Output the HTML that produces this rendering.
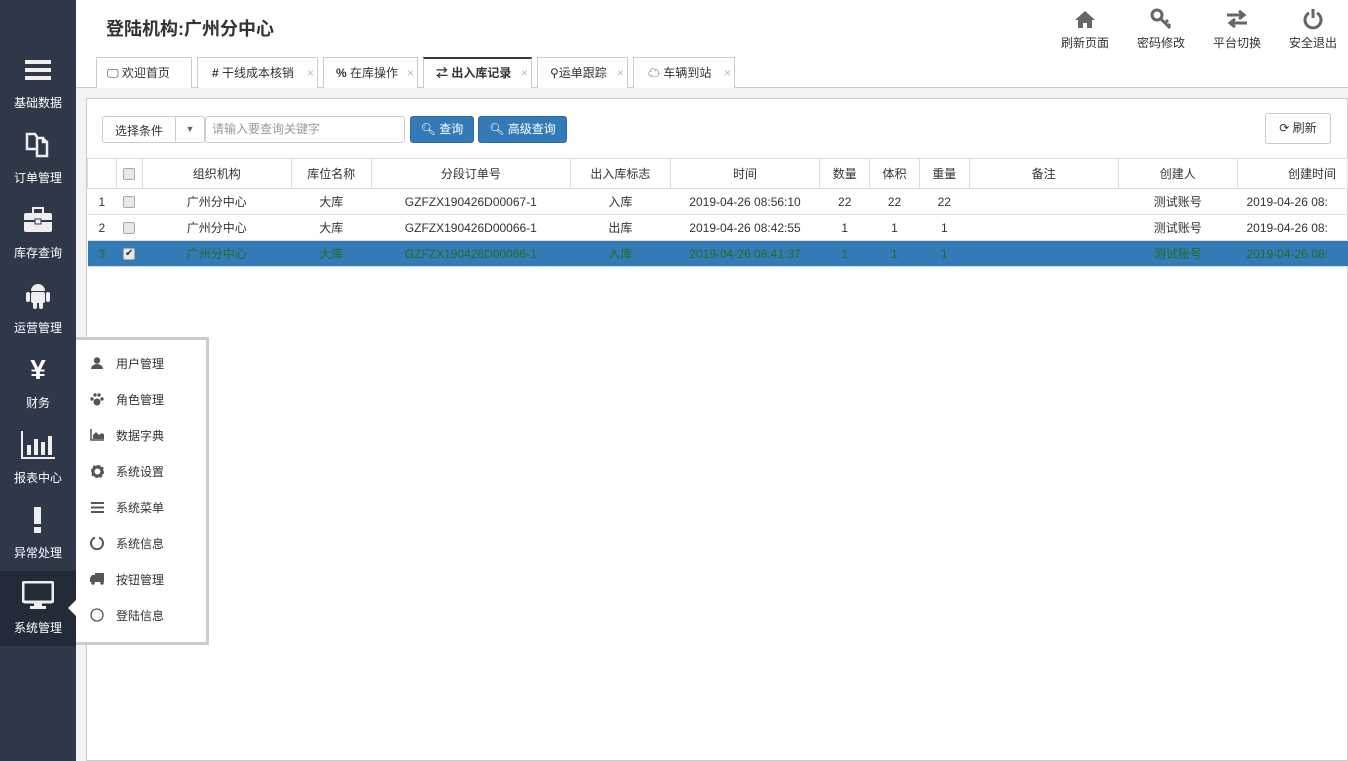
<!DOCTYPE html>
<html><head><meta charset="utf-8"><style>
*{box-sizing:border-box;margin:0;padding:0}
body{width:1348px;height:761px;overflow:hidden;background:#fff;font-family:"Liberation Sans","Noto Sans CJK SC",sans-serif;font-size:12px;color:#333;position:relative}
.side{position:absolute;left:0;top:0;width:76px;height:761px;background:#2e3849}
.mi{position:absolute;left:0;width:76px;height:75px;color:#fff;text-align:center}
.mi .ic{position:absolute;left:0;right:0;top:9px;height:30px;display:flex;justify-content:center;align-items:center}
.mi .lb{position:absolute;left:0;right:0;top:48px;font-size:12px}
.act{background:#232b38}
.hdr{position:absolute;left:76px;top:0;right:0;height:57px}
.title{position:absolute;left:30px;top:15px;font-size:18px;font-weight:bold;color:#333}
.tb{position:absolute;top:8px;width:60px;text-align:center;color:#333}
.tb .i{height:22px;display:flex;justify-content:center;align-items:center}
.tb .t{margin-top:4px}
.tabs{position:absolute;left:76px;top:57px;right:0;height:31px;border-bottom:1px solid #ccc}
.tab{position:absolute;top:0;height:31px;border:1px solid #ccc;border-bottom:none;background:#fff;line-height:30px;font-size:12px;color:#333;padding-left:10px}
.tab .x{color:#bbb;font-size:12px;position:absolute;right:3px;top:0}
.tab.on{border-top:2px solid #2e3849;height:31px;line-height:28px;font-weight:bold}
.gray{position:absolute;left:76px;top:88px;right:0;bottom:0;background:#f3f3f3}
.panel{position:absolute;left:86px;top:98px;right:0;bottom:0;background:#fff;border:1px solid #ccc}
.sel{position:absolute;left:102px;top:116px;width:103px;height:27px;border:1px solid #ccc;border-radius:3px;background:#fff}
.inp{position:absolute;left:205px;top:116px;width:200px;height:27px;border:1px solid #ccc;border-radius:3px;color:#999;padding-left:6px;line-height:25px}
.btn{position:absolute;top:116px;height:27px;background:#337ab7;border:1px solid #2e6da4;border-radius:3px;color:#fff;line-height:25px;text-align:center}
table{position:absolute;left:87px;top:158px;border-collapse:collapse;table-layout:fixed}
td{height:26px;border-bottom:1px solid #ddd;text-align:center;white-space:nowrap;overflow:hidden;font-size:12px;color:#333}
th{height:30px;border:1px solid #ddd;font-weight:normal;text-align:center;white-space:nowrap;overflow:hidden;color:#333}
tr.s td{background:#337ab7;color:#217021}
.cb{display:inline-block;width:12px;height:12px;border:1px solid #aaa;border-radius:2px;background:#e8e8e8;vertical-align:middle}
.pop{position:absolute;left:76px;top:337px;width:133px;height:308px;background:#fff;border:3px solid #ccc;border-left:none}
.pi{position:absolute;left:0;height:20px;width:130px;font-size:12px;color:#333}
.pi .g{position:absolute;left:14px;top:3px;width:14px;height:14px;display:flex;align-items:center;justify-content:center}
.pi .l{position:absolute;left:40px;top:2px}
</style></head><body>
<div class="side">
 <div class="mi" style="top:46px"><div class="ic"><svg width="26" height="22"><rect y="1" width="26" height="4" fill="#eee"/><rect y="9" width="26" height="4" fill="#eee"/><rect y="17" width="26" height="4" fill="#eee"/></svg></div><div class="lb">基础数据</div></div>
 <div class="mi" style="top:121px"><div class="ic"><svg width="30" height="30"><path d="M4 4h8l2 3v12H4z M14 8h6v4h4v14H14z" fill="none" stroke="#eee" stroke-width="2.5"/><path d="M20 8l4 4" stroke="#eee" stroke-width="2"/></svg></div><div class="lb">订单管理</div></div>
 <div class="mi" style="top:196px"><div class="ic"><svg width="30" height="26"><rect x="1" y="6" width="28" height="19" rx="2" fill="#eee"/><rect x="10" y="1" width="10" height="6" fill="none" stroke="#eee" stroke-width="2"/><rect x="1" y="13" width="28" height="2" fill="#2e3849"/><rect x="12" y="12" width="6" height="5" fill="#eee" stroke="#2e3849"/></svg></div><div class="lb">库存查询</div></div>
 <div class="mi" style="top:271px"><div class="ic"><svg width="24" height="28"><path d="M5 10a7 7 0 0 1 14 0z" fill="#eee"/><rect x="5" y="11" width="14" height="11" rx="2" fill="#eee"/><rect x="0" y="11" width="4" height="10" rx="2" fill="#eee"/><rect x="20" y="11" width="4" height="10" rx="2" fill="#eee"/><rect x="7" y="20" width="4" height="8" rx="2" fill="#eee"/><rect x="13" y="20" width="4" height="8" rx="2" fill="#eee"/></svg></div><div class="lb">运营管理</div></div>
 <div class="mi" style="top:346px"><div class="ic" style="font-size:28px;font-weight:bold">¥</div><div class="lb">财务</div></div>
 <div class="mi" style="top:421px"><div class="ic"><svg width="34" height="28"><path d="M1 0v27h33" fill="none" stroke="#eee" stroke-width="2"/><rect x="6" y="14" width="4" height="10" fill="#eee"/><rect x="13" y="8" width="4" height="16" fill="#eee"/><rect x="20" y="11" width="4" height="13" fill="#eee"/><rect x="27" y="5" width="4" height="19" fill="#eee"/></svg></div><div class="lb">报表中心</div></div>
 <div class="mi" style="top:496px"><div class="ic"><svg width="8" height="26"><rect width="7" height="17" fill="#eee"/><rect y="20" width="7" height="6" fill="#eee"/></svg></div><div class="lb">异常处理</div></div>
 <div class="mi act" style="top:571px"><div class="ic"><svg width="32" height="28"><rect x="1" y="1" width="30" height="20" rx="2" fill="none" stroke="#eee" stroke-width="3"/><rect x="12" y="21" width="8" height="4" fill="#eee"/><rect x="8" y="25" width="16" height="3" fill="#eee"/></svg></div><div class="lb">系统管理</div></div>
</div>
<div class="hdr">
 <div class="title">登陆机构:广州分中心</div>
 <div class="tb" style="left:979px"><div class="i"><svg width="20" height="18"><path d="M10 1L0 10h3v8h5v-5h4v5h5v-8h3z" fill="#666"/></svg></div><div class="t">刷新页面</div></div>
 <div class="tb" style="left:1055px"><div class="i"><svg width="22" height="22"><circle cx="7" cy="7" r="5" fill="none" stroke="#666" stroke-width="3"/><path d="M10 10l10 10M15 15l3-3M18 18l2-2" stroke="#666" stroke-width="3"/></svg></div><div class="t">密码修改</div></div>
 <div class="tb" style="left:1131px"><div class="i"><svg width="22" height="18"><path d="M1 5h16M13 1l5 4-5 4M21 13H5M9 9l-5 4 5 4" fill="none" stroke="#666" stroke-width="3"/></svg></div><div class="t">平台切换</div></div>
 <div class="tb" style="left:1207px"><div class="i"><svg width="20" height="22"><path d="M6 5a8 8 0 1 0 8 0" fill="none" stroke="#666" stroke-width="3"/><path d="M10 1v9" stroke="#666" stroke-width="3"/></svg></div><div class="t">安全退出</div></div>
</div>
<div class="tabs">
 <div class="tab" style="left:20px;width:96px">🖵 欢迎首页</div>
 <div class="tab" style="left:121px;width:121px;padding-left:14px"><b>#</b> 干线成本核销<span class="x">×</span></div>
 <div class="tab" style="left:247px;width:95px;padding-left:12px"><b>%</b> 在库操作<span class="x">×</span></div>
 <div class="tab on" style="left:347px;width:109px;padding-left:12px">⇄ 出入库记录<span class="x" style="font-weight:normal">×</span></div>
 <div class="tab" style="left:461px;width:91px;padding-left:12px">⚲运单跟踪<span class="x">×</span></div>
 <div class="tab" style="left:557px;width:102px;padding-left:14px">☁ 车辆到站<span class="x">×</span></div>
</div>
<div class="gray"></div>
<div class="panel"></div>
<div class="sel"><span style="position:absolute;left:12px;top:5px">选择条件</span><span style="position:absolute;left:72px;top:0;height:25px;border-left:1px solid #ccc;width:29px;text-align:center;line-height:25px;color:#666;font-size:9px">▼</span></div>
<div class="inp">请输入要查询关键字</div>
<div class="btn" style="left:410px;width:64px">🔍︎ 查询</div>
<div class="btn" style="left:478px;width:89px">🔍︎ 高级查询</div>
<div style="position:absolute;left:1265px;top:113px;width:66px;height:31px;border:1px solid #ccc;border-radius:3px;line-height:29px;text-align:center;color:#333">⟳ 刷新</div>
<table>
<colgroup><col style="width:29px"><col style="width:26px"><col style="width:150px"><col style="width:80px"><col style="width:200px"><col style="width:100px"><col style="width:150px"><col style="width:50px"><col style="width:50px"><col style="width:50px"><col style="width:150px"><col style="width:120px"><col style="width:110px"></colgroup>
<tr><th></th><th><span class="cb"></span></th><th>组织机构</th><th>库位名称</th><th>分段订单号</th><th>出入库标志</th><th>时间</th><th>数量</th><th>体积</th><th>重量</th><th>备注</th><th>创建人</th><th style="text-align:left;padding-left:50px">创建时间</th></tr>
<tr><td>1</td><td><span class="cb"></span></td><td>广州分中心</td><td>大库</td><td>GZFZX190426D00067-1</td><td>入库</td><td>2019-04-26 08:56:10</td><td>22</td><td>22</td><td>22</td><td></td><td>测试账号</td><td style="text-align:left;padding-left:9px">2019-04-26 08:</td></tr>
<tr><td>2</td><td><span class="cb"></span></td><td>广州分中心</td><td>大库</td><td>GZFZX190426D00066-1</td><td>出库</td><td>2019-04-26 08:42:55</td><td>1</td><td>1</td><td>1</td><td></td><td>测试账号</td><td style="text-align:left;padding-left:9px">2019-04-26 08:</td></tr>
<tr class="s"><td>3</td><td><span class="cb" style="font-size:10px;line-height:10px;color:#333">✔</span></td><td>广州分中心</td><td>大库</td><td>GZFZX190426D00066-1</td><td>入库</td><td>2019-04-26 08:41:37</td><td>1</td><td>1</td><td>1</td><td></td><td>测试账号</td><td style="text-align:left;padding-left:9px">2019-04-26 08:</td></tr>
</table>
<div class="pop">
 <div class="pi" style="top:13px"><span class="g"><svg width="12" height="12"><circle cx="6" cy="3.5" r="3.2" fill="#555"/><path d="M0 12a6 5 0 0 1 12 0z" fill="#555"/></svg></span><span class="l">用户管理</span></div>
 <div class="pi" style="top:49px"><span class="g"><svg width="14" height="13"><circle cx="7" cy="9" r="3.5" fill="#555"/><circle cx="2" cy="6" r="1.7" fill="#555"/><circle cx="12" cy="6" r="1.7" fill="#555"/><circle cx="5" cy="2" r="1.7" fill="#555"/><circle cx="9" cy="2" r="1.7" fill="#555"/></svg></span><span class="l">角色管理</span></div>
 <div class="pi" style="top:85px"><span class="g"><svg width="18" height="12"><path d="M1 0v11h17" fill="none" stroke="#555" stroke-width="1.5"/><path d="M3 10V6l3-3 3 3 3-2 4 3v3z" fill="#555"/></svg></span><span class="l">数据字典</span></div>
 <div class="pi" style="top:121px"><span class="g"><svg width="13" height="13"><circle cx="6.5" cy="6.5" r="4.5" fill="none" stroke="#555" stroke-width="3"/><circle cx="6.5" cy="6.5" r="6" fill="none" stroke="#555" stroke-width="2" stroke-dasharray="2 2.7"/></svg></span><span class="l">系统设置</span></div>
 <div class="pi" style="top:157px"><span class="g"><svg width="13" height="11"><rect width="13" height="2" fill="#555"/><rect y="4.5" width="13" height="2" fill="#555"/><rect y="9" width="13" height="2" fill="#555"/></svg></span><span class="l">系统菜单</span></div>
 <div class="pi" style="top:193px"><span class="g"><svg width="14" height="14"><path d="M9 1.6A6 6 0 1 1 5 1.6" fill="none" stroke="#555" stroke-width="2"/></svg></span><span class="l">系统信息</span></div>
 <div class="pi" style="top:229px"><span class="g"><svg width="15" height="12"><rect x="5" y="0" width="10" height="9" fill="#555"/><path d="M0 9V5l2-3h3v7z" fill="#555"/><circle cx="3" cy="10" r="1.8" fill="#555"/><circle cx="12" cy="10" r="1.8" fill="#555"/></svg></span><span class="l">按钮管理</span></div>
 <div class="pi" style="top:265px"><span class="g"><svg width="14" height="14"><circle cx="7" cy="7" r="6" fill="none" stroke="#555" stroke-width="1.3"/></svg></span><span class="l">登陆信息</span></div>
</div>
<div style="position:absolute;left:68px;top:600px;width:0;height:0;border-top:8px solid transparent;border-bottom:8px solid transparent;border-right:8px solid #fff"></div>
</body></html>
